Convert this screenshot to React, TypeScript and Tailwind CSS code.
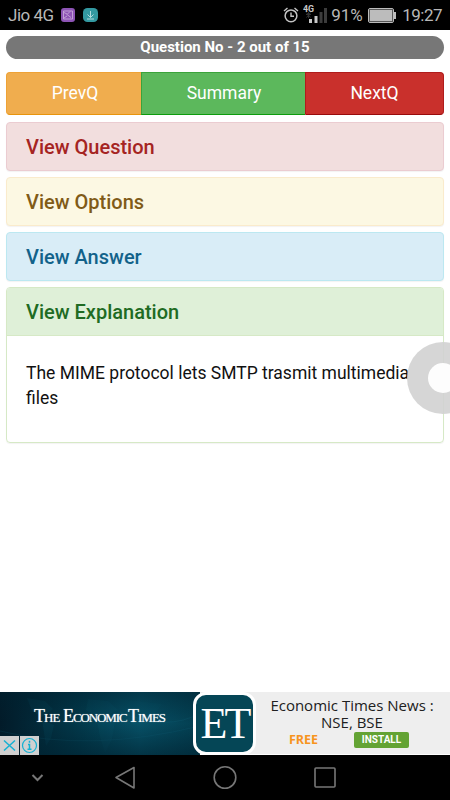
import { clsx } from 'clsx'

interface PanelHeading {
  title: string
  className: string
}

const collapsedPanels: PanelHeading[] = [
  { title: 'View Question', className: 'bg-[#f2dede] border-[#ebccd1] text-[#a52422]' },
  { title: 'View Options', className: 'bg-[#fcf8e3] border-[#faebcc] text-[#805b17]' },
  { title: 'View Answer', className: 'bg-[#d9edf7] border-[#bce8f1] text-[#12628a]' }
]

function SignalIcon() {
  return (
    <svg width="25" height="22" viewBox="0 0 25 22" className="shrink-0">
      <text x="0" y="8.500" fontSize="8.800" fontWeight="700" fill="#c8c8c8" fontFamily="Roboto, sans-serif">4G</text>
      <path d="M3 11.500h5M5.500 9v6M3.500 9.500l4 5M7.500 9.500l-4 5" fill="none" stroke="#333333" strokeWidth="1" />
      <path d="M6 16h3v4h-3zM11.500 13h3v7h-3z" fill="#c8c8c8" />
      <path d="M16.500 9h3v11h-3zM21 5h3v15h-3z" fill="#3c3c3c" />
    </svg>
  )
}

function StatusBar() {
  return (
    <div className="flex h-[30px] items-center bg-black text-[#b8b8b8]">
      <span className="ml-[8px] mt-px w-[53px] text-[17px] leading-none tracking-[-0.5px] whitespace-nowrap">Jio 4G</span>
      <svg width="14" height="14" viewBox="0 0 14 14">
        <rect width="14" height="14" rx="3" fill="#8d54b5" />
        <path d="M2.500 3h9v8h-9zM3 4.500l3 1.500M9 3.500l-3 3 4 3M3 10l3-2" fill="none" stroke="#cdb2dd" strokeWidth=".8" />
      </svg>
      <svg width="15" height="14" viewBox="0 0 15 14" className="ml-2">
        <rect width="15" height="14" rx="4.500" fill="#3399a1" />
        <path d="M7.500 3v6.500M4.500 6.500l3 3 3-3M4 11h7" fill="none" stroke="#b3dcdf" />
      </svg>

      <svg width="16" height="16" viewBox="0 0 16 16" fill="none" stroke="#c4c4c4" className="-mr-px ml-auto shrink-0">
        <circle cx="8" cy="8.800" r="5.900" strokeWidth="1.500" />
        <path d="M8 5.500v3.800h3M1 4l3.500-3M15 4l-3.500-3" strokeWidth="1.400" />
      </svg>
      <div className="mb-[2px] ml-[5px]">
        <SignalIcon />
      </div>
      <span className="ml-[3px] mt-px w-[37px] text-[17px] leading-none whitespace-nowrap">91%</span>
      <svg width="28" height="15" viewBox="0 0 28 15" className="shrink-0">
        <rect x=".5" y=".5" width="25" height="14" rx="1.500" fill="none" stroke="#bcbcbc" />
        <rect x="1.500" y="1.500" width="23" height="12" fill="#bcbcbc" stroke="#555555" strokeWidth=".6" />
        <rect x="26" y="4" width="2" height="7" fill="#bcbcbc" />
      </svg>
      <span className="ml-[6px] mr-[8px] mt-px text-[17px] leading-none tracking-[-0.5px]">19:27</span>
    </div>
  )
}

function NavButtons() {
  const base = 'h-[43px] border text-[17.5px] leading-none text-white'
  return (
    <div className="mt-[13px] flex">
      <button className={clsx(base, 'w-[135px] rounded-l-[4px] border-r-0 border-[#eea236] border-b-[#e8940c] bg-[#f0ad4e] pl-[2px]')}>
        PrevQ
      </button>
      <button className={clsx(base, 'w-[164px] border-r-0 border-[#3ba33b] border-b-[#0c9c0c] bg-[#5cb85c] pl-px')}>
        Summary
      </button>
      <button className={clsx(base, 'w-[139px] rounded-r-[4px] border-[#b01c1c] border-b-[#980b0b] bg-[#c9302c]')}>
        NextQ
      </button>
    </div>
  )
}

function AdBanner() {
  return (
    <div className="relative flex h-[63px] overflow-hidden bg-[#eeeeee]">
      <div className="relative w-[200px] bg-[linear-gradient(90deg,#021b29_0%,#02394b_40%,#075167_70%,#033e50_100%)]">
        {/* Faint world map texture */}
        <svg width="200" height="63" viewBox="0 0 200 63" className="absolute inset-0">
          <defs>
            <linearGradient id="shade" x1="0" y1="0" x2="0" y2="1">
              <stop offset="0" stopColor="#00212f" stopOpacity=".5" />
              <stop offset=".5" stopColor="#00212f" stopOpacity="0" />
              <stop offset="1" stopColor="#00212f" stopOpacity=".6" />
            </linearGradient>
          </defs>
          <path d="M27 6l18 3 8 8-11 8-10-6zM42 28l12 5-3 13-5 8zM88 7l20 2 10 9-17 8-15-8zM97 29l18 1-3 17-7 14-5-16zM120 7l42 5-10 13-18 8-14-12z" fill="#0c6175" opacity=".18" />
          <path d="M120 20Q168 40 200 21M0 39Q90 61 200 34" fill="none" stroke="#137087" opacity=".2" />
          <rect width="200" height="63" fill="url(#shade)" />
        </svg>
        <div className="absolute left-[34px] top-[14px] flex items-baseline font-['Liberation_Serif',serif] text-[13px] leading-[20px] tracking-[-1px] whitespace-nowrap text-white [text-shadow:0_0_1px_#ffffffb0]">
          <span className="w-[29px]"><span className="text-[18px]">T</span>HE</span>
          <span className="w-[65px] tracking-[-1.1px]"><span className="text-[18px]">E</span>CONOMIC</span>
          <span><span className="text-[18px]">T</span>IMES</span>
        </div>
        <div className="absolute bottom-0 left-0 flex gap-px">
          <svg width="19" height="19" viewBox="0 0 19 19" fill="none" stroke="#13b1d3">
            <rect width="19" height="19" fill="#d0d0d0" stroke="none" />
            <path d="M4 4.500l11 10M15 4.500l-11 10" strokeWidth="1.500" />
          </svg>
          <svg width="19" height="19" viewBox="0 0 19 19" fill="none" stroke="#13b1d3">
            <rect width="19" height="19" fill="#d0d0d0" stroke="none" />
            <circle cx="9.500" cy="9.500" r="7" strokeWidth="1.200" />
            <path d="M9.500 4.800v2M8 8.500h1.500v4.500M7.500 13.300h4" strokeWidth="1.500" />
          </svg>
        </div>
      </div>

      {/* App icon sits across both halves of the banner */}
      <div className="absolute left-[193px] top-0 flex h-[63px] w-[63px] items-center justify-center rounded-[13px] border-[3px] border-white bg-[#054656] font-['Liberation_Serif',serif] text-[44px] leading-none tracking-[-3px] text-white">
        <span>ET</span>
      </div>

      <div className="flex-1 pl-[54px] pt-[5px] font-['Open_Sans',sans-serif]">
        <p className="text-center text-[15px] leading-[16.5px] text-[#202020]">
          Economic Times News :<br />NSE, BSE
        </p>
        <div className="mt-[2px] flex h-4 items-center">
          <span className="ml-[35px] mt-px w-[65px] text-[12.5px] font-bold leading-none text-[#f7941e]">FREE</span>
          <button className="h-4 w-[55px] rounded-[2px] bg-[#63a334] font-['Roboto',sans-serif] text-[10px] font-bold leading-none text-white">INSTALL</button>
        </div>
      </div>
      <div className="absolute bottom-0 left-[200px] right-0 h-px bg-white" />
    </div>
  )
}

function SystemNav() {
  return (
    <div className="h-[45px] bg-black">
      <svg width="450" height="45" viewBox="0 0 450 45" fill="none" stroke="#777777" strokeWidth="1.600">
        <path d="M32.500 20l5 5 5-5" strokeWidth="2" />
        <path d="M134 12.500v20.500l-18-10.500z" strokeLinejoin="round" />
        <circle cx="225" cy="22.500" r="10.800" />
        <rect x="315" y="13" width="20" height="19" rx="1" />
      </svg>
    </div>
  )
}

export default function App() {
  return (
    <div className="relative flex h-[800px] w-[450px] flex-col overflow-hidden bg-white font-['Roboto',sans-serif]">
      <StatusBar />

      <main className="flex-1 px-[6px] pt-[6px]">
        <div className="h-[23px] rounded-full bg-[#777777] text-center text-[15px] font-bold leading-[23px] text-white">
          Question No - 2 out of 15
        </div>

        <NavButtons />

        <div className="mt-[7px] flex flex-col gap-[6px]">
          {collapsedPanels.map(panel => (
            <div
              key={panel.title}
              className={clsx(
                'h-[49px] rounded-[4px] border pl-[19px] text-[20px] font-medium leading-[49px] shadow-[0_1px_1px_rgba(0,0,0,0.05)]',
                panel.className
              )}
            >
              {panel.title}
            </div>
          ))}

          <div className="h-[156px] rounded-[4px] border border-[#d6e9c6] shadow-[0_1px_1px_rgba(0,0,0,0.05)]">
            <div className="h-[48px] rounded-t-[3px] border-b border-[#d6e9c6] bg-[#dff0d8] pl-[19px] text-[20px] font-medium leading-[49px] text-[#206b23]">
              View Explanation
            </div>
            <p className="pl-[19px] pt-[25px] text-[17.5px] leading-[25px] text-[#111111]">
              The MIME protocol lets SMTP trasmit multimedia files
            </p>
          </div>
        </div>
      </main>

      <AdBanner />
      <SystemNav />

      {/* Floating assistive button, partly off screen */}
      <div className="absolute left-[407px] top-[342px] flex h-[72px] w-[72px] items-center justify-center rounded-full bg-[#d2d2d2]/90">
        <div className="h-[30px] w-[30px] rounded-full bg-white/95" />
      </div>
    </div>
  )
}
